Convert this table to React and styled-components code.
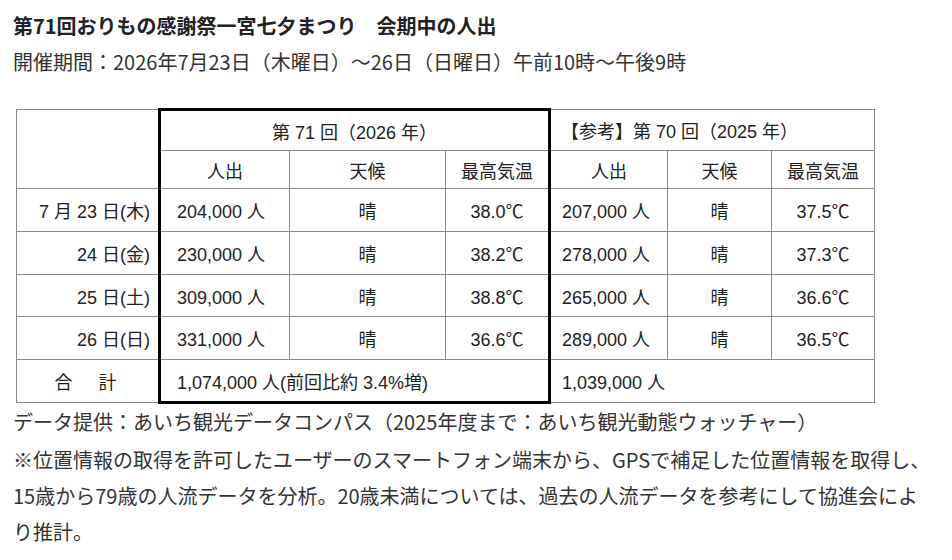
import React from "react";
import styled, { createGlobalStyle } from "styled-components";

const Global = createGlobalStyle`
  html, body { margin: 0; padding: 0; background: #fff; }
  body { font-family: "Noto Sans CJK JP", "Noto Sans", sans-serif; color: #222; }
`;

const Page = styled.div`
  padding: 8px 0 0 13px;
  width: 939px;
  box-sizing: border-box;
`;

const Title = styled.h1`
  margin: 0;
  font-size: 20px;
  line-height: 36px;
  font-weight: 700;
  color: #222;
  white-space: pre;
`;

const Period = styled.p`
  margin: 0;
  font-size: 20px;
  line-height: 36px;
  color: #333;
`;

const Table = styled.table`
  margin: 28px 0 0 3px;
  border-collapse: collapse;
  table-layout: fixed;
  width: 858px;
  font-family: "Liberation Sans", "Noto Sans CJK JP", sans-serif;
  font-size: 18px;
  color: #222;
`;

const Row = styled.tr`
  height: ${(p) => p.$h}px;
`;

const Cell = styled.td`
  border: 1px solid #8a8a8a;
  padding: 0 ${(p) => p.$pr ?? 0}px 0 ${(p) => p.$pl ?? 0}px;
  text-align: ${(p) => p.$align || "center"};
  vertical-align: middle;
  white-space: nowrap;
  font-weight: 400;
  letter-spacing: ${(p) => p.$ls || 0}px;
  ${(p) => (p.$tl ? "border-left: 3px solid #000;" : "")}
  ${(p) => (p.$tr ? "border-right: 3px solid #000;" : "")}
  ${(p) => (p.$tt ? "border-top: 3px solid #000;" : "")}
  ${(p) => (p.$tb ? "border-bottom: 3px solid #000;" : "")}
`;

const Notes = styled.div`
  font-size: 20px;
  line-height: 36px;
  color: #333;
`;

const Source = styled.p`
  margin: 0 0 2px;
`;

const Remark = styled.p`
  margin: 0;
`;

const days = [
  { d: "7 月 23 日(木)", a: "204,000 人", at: "38.0℃", b: "207,000 人", bt: "37.5℃", h: 43 },
  { d: "24 日(金)", a: "230,000 人", at: "38.2℃", b: "278,000 人", bt: "37.3℃", h: 43 },
  { d: "25 日(土)", a: "309,000 人", at: "38.8℃", b: "265,000 人", bt: "36.6℃", h: 42 },
  { d: "26 日(日)", a: "331,000 人", at: "36.6℃", b: "289,000 人", bt: "36.5℃", h: 43 },
];

export default function App() {
  return (
    <>
      <Global />
      <Page>
        <Title>第71回おりもの感謝祭一宮七夕まつり　会期中の人出</Title>
        <Period>開催期間：2026年7月23日（木曜日）～26日（日曜日）午前10時～午後9時</Period>
        <Table>
          <colgroup>
            <col style={{ width: 143 }} />
            <col style={{ width: 130 }} />
            <col style={{ width: 156 }} />
            <col style={{ width: 104 }} />
            <col style={{ width: 118 }} />
            <col style={{ width: 104 }} />
            <col style={{ width: 103 }} />
          </colgroup>
          <tbody>
            <Row $h={41}>
              <Cell rowSpan={2} />
              <Cell colSpan={3} $tl $tr $tt>第 71 回（2026 年）</Cell>
              <Cell colSpan={3} $align="left" $pl={10}>【参考】第 70 回（2025 年）</Cell>
            </Row>
            <Row $h={38}>
              <Cell $tl>人出</Cell>
              <Cell>天候</Cell>
              <Cell $tr>最高気温</Cell>
              <Cell>人出</Cell>
              <Cell>天候</Cell>
              <Cell>最高気温</Cell>
            </Row>
            {days.map((r) => (
              <Row key={r.d} $h={r.h}>
                <Cell $align="right" $pr={8}>{r.d}</Cell>
                <Cell $tl $align="left" $pl={16}>{r.a}</Cell>
                <Cell>晴</Cell>
                <Cell $tr>{r.at}</Cell>
                <Cell $align="left" $pl={11}>{r.b}</Cell>
                <Cell>晴</Cell>
                <Cell>{r.bt}</Cell>
              </Row>
            ))}
            <Row $h={43}>
              <Cell $ls={4}>合　計</Cell>
              <Cell colSpan={3} $tl $tr $tb $align="left" $pl={16}>1,074,000 人(前回比約 3.4%増)</Cell>
              <Cell colSpan={3} $align="left" $pl={11}>1,039,000 人</Cell>
            </Row>
          </tbody>
        </Table>
        <Notes>
          <Source>データ提供：あいち観光データコンパス（2025年度まで：あいち観光動態ウォッチャー）</Source>
          <Remark>
            ※位置情報の取得を許可したユーザーのスマートフォン端末から、GPSで補足した位置情報を取得し、
            <br />
            15歳から79歳の人流データを分析。20歳未満については、過去の人流データを参考にして協進会によ
            <br />
            り推計。
          </Remark>
        </Notes>
      </Page>
    </>
  );
}
